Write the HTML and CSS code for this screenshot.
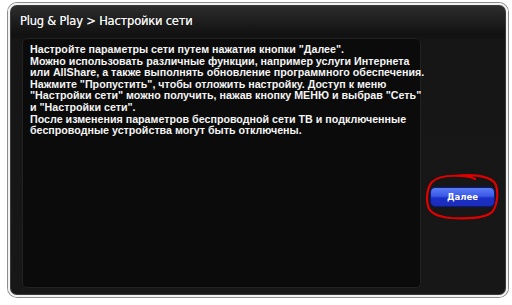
FILE: index.html
```html
<!DOCTYPE html>
<html lang="ru">
<head>
<meta charset="utf-8">
<link rel="stylesheet" href="styles.css">
</head>
<body>
<div class="frame">
  <div class="title">Plug &amp; Play &gt; Настройки сети</div>
  <div class="body">
    <div class="panel">
      <p class="msg">Настройте параметры сети путем нажатия кнопки "Далее".<br>Можно использовать различные функции, например услуги Интернета<br>или AllShare, а также выполнять обновление программного обеспечения.<br>Нажмите "Пропустить", чтобы отложить настройку. Доступ к меню<br>"Настройки сети" можно получить, нажав кнопку МЕНЮ и выбрав "Сеть"<br>и "Настройки сети".<br>После изменения параметров беспроводной сети ТВ и подключенные<br>беспроводные устройства могут быть отключены.</p>
    </div>
    <div class="side">
      <div class="btn-wrap">
        <button class="btn">Далее</button>
        <svg class="circle" viewBox="0 0 74 48" width="74" height="48">
          <path d="M30 3 C44 1 62 2 69 9 C74 15 73 30 68 38 C62 45 44 46 26 45 C14 44 5 41 3 33 C1 26 2 15 7 9 C12 4 22 2 36 3 C42 3 48 5 50 6" fill="none" stroke="#e00000" stroke-width="2.2" stroke-linecap="round"/>
        </svg>
      </div>
    </div>
  </div>
</div>
</body>
</html>
```
FILE: styles.css
```css
html, body {
  margin: 0;
  padding: 0;
  background: #ffffff;
}
body {
  width: 512px;
  height: 305px;
  overflow: hidden;
}
.frame {
  box-sizing: border-box;
  margin: 3px 0 0 8px;
  width: 500px;
  height: 294px;
  border: 2px solid #f2f2f2;
  border-radius: 9px;
  box-shadow: 0 0 0 1px #8c8c8c, inset 0 0 0 1px #3a3a3a;
  background: linear-gradient(#2e2e2e 0px, #1c1c1c 18px, #111111 30px, #161616 36px, #171717 100%);
  display: flex;
  flex-direction: column;
  overflow: hidden;
}
.title {
  height: 31px;
  padding-left: 10px;
  display: flex;
  align-items: center;
  font-family: "DejaVu Sans", sans-serif;
  font-size: 11.5px;
  color: #f0f0f0;
  letter-spacing: -0.2px;
  text-shadow: 0 0 0.4px #f0f0f0;
}
.body {
  flex: 1;
  display: flex;
  padding: 2px 0 7px 12px;
}
.panel {
  box-sizing: border-box;
  width: 399px;
  background: #0b0b0b;
  border: 1px solid #222;
  border-radius: 5px;
  padding: 5px 7px;
}
.msg {
  margin: 0;
  font-family: "Liberation Sans", Arial, sans-serif;
  font-weight: bold;
  font-size: 10.7px;
  line-height: 11.6px;
  color: #f4f4f4;
  white-space: nowrap;
}
.side {
  flex: 1;
  padding: 149px 0 0 9px;
}
.btn-wrap {
  position: relative;
  width: 65px;
  height: 20px;
}
.btn {
  display: block;
  width: 65px;
  height: 20px;
  border: 1px solid #0a1a80;
  border-radius: 5px;
  background: linear-gradient(#5c7cf5 0%, #3a5ae8 45%, #1c30c8 55%, #1a2cb8 100%);
  color: #ffffff;
  font-family: "DejaVu Sans", sans-serif;
  font-weight: bold;
  font-size: 8.5px;
  padding: 0;
}
.circle {
  position: absolute;
  left: -5px;
  top: -14px;
}
```
